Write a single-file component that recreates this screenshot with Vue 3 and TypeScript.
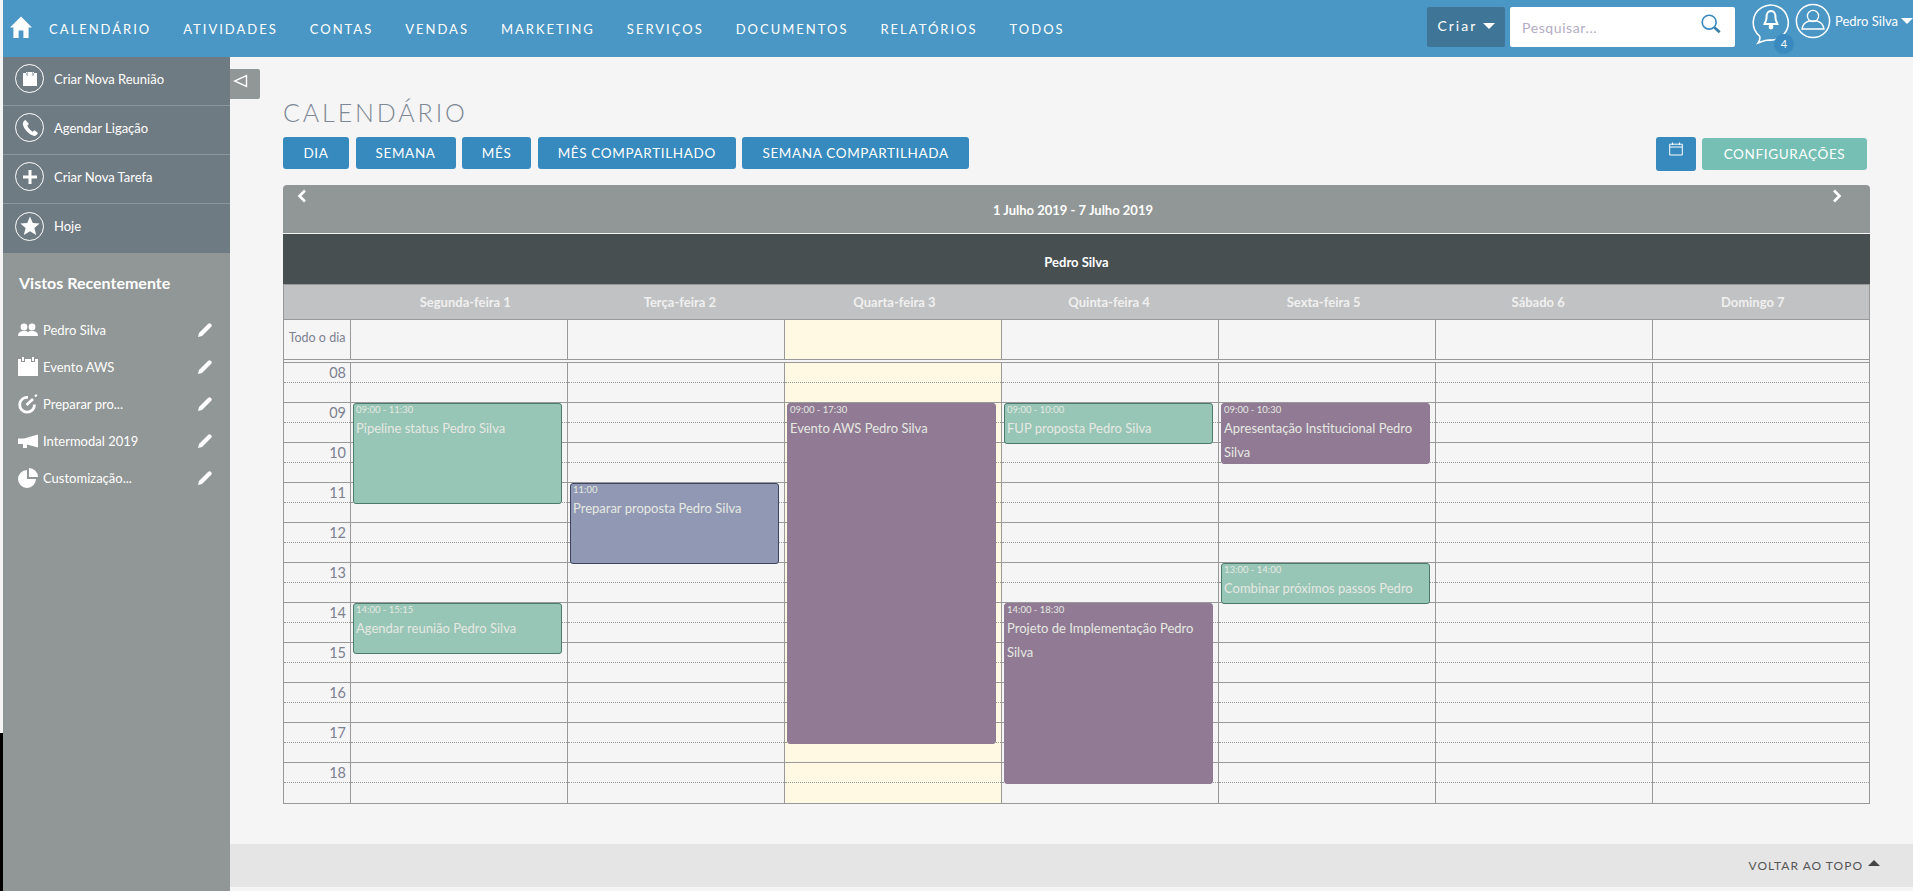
<script setup lang="ts">
interface CalEvent {
  day: number
  start: number
  hours: number
  time: string
  title: string
  kind: 'meeting' | 'call' | 'task'
}

const navItems = ['Calendário', 'Atividades', 'Contas', 'Vendas', 'Marketing', 'Serviços', 'Documentos', 'Relatórios', 'Todos']
const days = ['Segunda-feira 1', 'Terça-feira 2', 'Quarta-feira 3', 'Quinta-feira 4', 'Sexta-feira 5', 'Sábado 6', 'Domingo 7']
const hours = ['08', '09', '10', '11', '12', '13', '14', '15', '16', '17', '18']
const viewButtons = ['Dia', 'Semana', 'Mês', 'Mês Compartilhado', 'Semana Compartilhada']

const recents = [
  { label: 'Pedro Silva', icon: 'people' },
  { label: 'Evento AWS', icon: 'calendar' },
  { label: 'Preparar pro...', icon: 'task' },
  { label: 'Intermodal 2019', icon: 'horn' },
  { label: 'Customização...', icon: 'pie' },
]

const events: CalEvent[] = [
  { day: 0, start: 9, hours: 2.5, time: '09:00 - 11:30', title: 'Pipeline status Pedro Silva', kind: 'call' },
  { day: 0, start: 14, hours: 1.25, time: '14:00 - 15:15', title: 'Agendar reunião Pedro Silva', kind: 'call' },
  { day: 1, start: 11, hours: 2, time: '11:00', title: 'Preparar proposta Pedro Silva', kind: 'task' },
  { day: 2, start: 9, hours: 8.5, time: '09:00 - 17:30', title: 'Evento AWS Pedro Silva', kind: 'meeting' },
  { day: 3, start: 9, hours: 1, time: '09:00 - 10:00', title: 'FUP proposta Pedro Silva', kind: 'call' },
  { day: 3, start: 14, hours: 4.5, time: '14:00 - 18:30', title: 'Projeto de Implementação Pedro Silva', kind: 'meeting' },
  { day: 4, start: 9, hours: 1.5, time: '09:00 - 10:30', title: 'Apresentação Institucional Pedro Silva', kind: 'meeting' },
  { day: 4, start: 13, hours: 1, time: '13:00 - 14:00', title: 'Combinar próximos passos Pedro', kind: 'call' },
]

const HOUR_PX = 40
const eventsFor = (day: number) => events.filter((e) => e.day === day)
const eventStyle = (e: CalEvent) => ({
  top: `${(e.start - 8) * HOUR_PX}px`,
  height: `${e.hours * HOUR_PX + 1}px`,
})
</script>

<template>
  <div class="page">
    <header class="topbar">
      <svg class="home" viewBox="0 0 24 24" width="24" height="24"><path d="M12 1.5 L23 12.5 H19.6 V23 H14.4 V15.5 H9.6 V23 H4.4 V12.5 H1 Z" fill="#fff" /></svg>
      <nav class="nav">
        <a v-for="n in navItems" :key="n">{{ n }}</a>
      </nav>
      <div class="top-right">
        <button class="create">Criar <span class="caret"></span></button>
        <div class="search">
          <span>Pesquisar...</span>
          <svg viewBox="0 0 24 24" width="22" height="22"><circle cx="10" cy="10" r="7.6" fill="none" stroke="#3a8abf" stroke-width="1.8" /><path d="M15.8 15.8 L21.5 21" stroke="#3a7fa8" stroke-width="3" /></svg>
        </div>
        <div class="bell">
          <svg viewBox="0 0 38 42" width="38" height="42">
            <path d="M6 40 C8 37 8.5 35 7.5 33 A17.5 17.5 0 1 1 17 37 C13 37 10 38.5 6 40 Z" fill="none" stroke="#fff" stroke-width="1.6" />
            <path d="M19 8 C14.5 8 14.5 12 14.5 15 C14.5 18 13 19 12.5 21 H25.5 C25 19 23.5 18 23.5 15 C23.5 12 23.5 8 19 8 Z" fill="none" stroke="#fff" stroke-width="2" />
            <circle cx="19" cy="24" r="2.4" fill="#fff" />
          </svg>
          <span class="badge">4</span>
        </div>
        <div class="user">
          <svg viewBox="0 0 36 36" width="36" height="36">
            <circle cx="18" cy="18" r="16.6" fill="none" stroke="#fff" stroke-width="1.5" />
            <circle cx="18" cy="13" r="5.6" fill="none" stroke="#fff" stroke-width="1.3" />
            <path d="M7 26 C8 20 12 18.5 14 18 H22 C24 18.5 28 20 29 26 Z" fill="none" stroke="#fff" stroke-width="1.3" />
          </svg>
          <span>Pedro Silva</span>
          <span class="caret"></span>
        </div>
      </div>
    </header>

    <div class="body">
      <aside class="sidebar">
        <ul class="actions">
          <li>
            <span class="round"><svg viewBox="0 0 14 14" width="14" height="14"><path fill-rule="evenodd" d="M0 1 H3 V0 H4.5 V3 H5 V0 H9 V3 H9.5 V0 H11 V1 H14 V14 H0 Z M3.5 1 V3.5 H5 V1 Z M9 1 V3.5 H10.5 V1 Z" fill="#fff" /></svg></span>
            Criar Nova Reunião
          </li>
          <li>
            <span class="round"><svg viewBox="0 0 18 18" width="18" height="18"><path d="M4.5 1 C2.5 2 1.5 3.5 2 6 C3 10 8 15.5 12.5 16.8 C14.5 17.2 16 16 17 14 L13.6 11.2 L11.5 12.8 C9.5 11.8 7 8.8 6.3 6.6 L8 5 Z" fill="#fff" /></svg></span>
            Agendar Ligação
          </li>
          <li>
            <span class="round"><svg viewBox="0 0 16 16" width="16" height="16"><path d="M6.5 1 H9.5 V6.5 H15 V9.5 H9.5 V15 H6.5 V9.5 H1 V6.5 H6.5 Z" fill="#fff" /></svg></span>
            Criar Nova Tarefa
          </li>
          <li>
            <span class="round"><svg viewBox="0 0 20 20" width="20" height="20"><path d="M10 .5 L12.8 7 L19.6 7.4 L14.4 12 L16.2 19 L10 15.2 L3.8 19 L5.6 12 L.4 7.4 L7.2 7 Z" fill="#fff" /></svg></span>
            Hoje
          </li>
        </ul>
        <h3>Vistos Recentemente</h3>
        <ul class="recents">
          <li v-for="r in recents" :key="r.label">
            <svg class="r-icon" viewBox="0 0 20 20" width="20" height="20">
              <template v-if="r.icon === 'people'">
                <circle cx="6" cy="7" r="3.4" fill="#fff" /><circle cx="14" cy="7" r="3.4" fill="#fff" />
                <path d="M0 16 C0 12 3 11 6 11 C8 11 9.5 11.5 10 12.2 C10.5 11.5 12 11 14 11 C17 11 20 12 20 16 Z" fill="#fff" />
              </template>
              <path v-else-if="r.icon === 'calendar'" d="M0 2 H3 V5 H7 V2 H13 V5 H17 V2 H20 V19 H0 Z M4 0 H6 V4 H4 Z M14 0 H16 V4 H14 Z" fill="#fff" />
              <template v-else-if="r.icon === 'task'">
                <path d="M16.5 10.5 A7.4 7.4 0 1 1 10 3.4" fill="none" stroke="#fff" stroke-width="2.8" />
                <path d="M8.5 11 L15 5" fill="none" stroke="#fff" stroke-width="2.8" />
                <path d="M17 2.5 L18.8 .8" fill="none" stroke="#fff" stroke-width="2" />
              </template>
              <path v-else-if="r.icon === 'horn'" d="M0 7.5 H6 L20 3.5 V16.5 L9 13.5 V17 H5 V13 H0 Z" fill="#fff" />
              <path v-else d="M9 2 V11 H18 A9 9 0 1 1 9 2 Z M11 0 A9 9 0 0 1 20 9 H11 Z" fill="#fff" />
            </svg>
            <span class="r-label">{{ r.label }}</span>
            <svg class="pencil" viewBox="0 0 14 14" width="14" height="14"><path d="M0 14 L1 10 L10 1 C11 0 12 0 13 1 C14 2 14 3 13 4 L4 13 Z" fill="#fff" /></svg>
          </li>
        </ul>
      </aside>

      <main class="main">
        <span class="toggle">
          <svg viewBox="0 0 15 14" width="15" height="14"><path d="M13.5 1.5 V12.5 L1.5 7 Z" fill="none" stroke="#fff" stroke-width="1.4" /></svg>
        </span>
        <div class="content">
          <h1>Calendário</h1>
          <div class="toolbar">
            <button v-for="b in viewButtons" :key="b" class="btn">{{ b }}</button>
            <span class="spacer"></span>
            <button class="btn cal-btn">
              <svg viewBox="0 0 14 14" width="14" height="14"><path d="M.7 2.2 H13.3 V13 H.7 Z M.7 5 H13.3 M3.5 .5 V3 M10.5 .5 V3" fill="none" stroke="#fff" stroke-width="1" /></svg>
            </button>
            <button class="btn config">Configurações</button>
          </div>

          <section class="calendar">
            <div class="cal-nav">
              <svg class="arrow" viewBox="0 0 10 14" width="10" height="14"><path d="M8 1.5 L2.5 7 L8 12.5" fill="none" stroke="#fff" stroke-width="2.6" /></svg>
              <strong>1 Julho 2019 - 7 Julho 2019</strong>
              <svg class="arrow next" viewBox="0 0 10 14" width="10" height="14"><path d="M2 1.5 L7.5 7 L2 12.5" fill="none" stroke="#fff" stroke-width="2.6" /></svg>
            </div>
            <div class="cal-owner">Pedro Silva</div>
            <div class="cal-table">
              <div class="row head">
                <div class="time-cell"></div>
                <div v-for="d in days" :key="d" class="day-head">{{ d }}</div>
              </div>
              <div class="row allday">
                <div class="time-cell">Todo o dia</div>
                <div v-for="(d, i) in days" :key="d" class="day-cell" :class="{ today: i === 2 }"></div>
              </div>
              <div class="row grid">
                <div class="hours">
                  <div v-for="h in hours" :key="h" class="hour-label">{{ h }}</div>
                </div>
                <div v-for="(d, i) in days" :key="d" class="day-col" :class="{ today: i === 2 }">
                  <div class="slots">
                    <div v-for="h in hours" :key="h" class="slot"></div>
                  </div>
                  <div
                    v-for="e in eventsFor(i)"
                    :key="e.title"
                    class="event"
                    :class="e.kind"
                    :style="eventStyle(e)"
                  >
                    <div class="e-time">{{ e.time }}</div>
                    <div class="e-title">{{ e.title }}</div>
                  </div>
                </div>
              </div>
            </div>
          </section>
        </div>
        <footer class="footer">
          <span>Voltar ao topo</span>
          <span class="up"></span>
        </footer>
      </main>
    </div>
  </div>
</template>

<style>
html,
body {
  margin: 0;
  background: #f5f5f5;
  overflow: hidden;
}
</style>

<style scoped>
.page {
  width: 1913px;
  height: 891px;
  padding-left: 3px;
  box-sizing: border-box;
  font-family: Lato, "Liberation Sans", sans-serif;
  background: linear-gradient(to bottom, #f5f5f5 733px, #000 733px);
  overflow: hidden;
}

.topbar {
  height: 57px;
  background: #4a96c4;
  display: flex;
  align-items: center;
  color: #fff;
}

.home {
  margin-left: 6px;
  margin-top: -4px;
}

.nav {
  display: flex;
  gap: 32px;
  margin-left: 16px;
}

.nav a {
  font-size: 13px;
  letter-spacing: 2px;
  text-transform: uppercase;
}

.top-right {
  margin-left: auto;
  display: flex;
  align-items: flex-start;
  height: 57px;
}

.create {
  margin-top: 7px;
  width: 78px;
  height: 40px;
  border: 0;
  border-radius: 2px;
  background: #3f7596;
  color: #fff;
  font: 14px Lato, sans-serif;
  letter-spacing: 2px;
  padding: 0 0 4px;
}

.caret {
  display: inline-block;
  border-left: 6px solid transparent;
  border-right: 6px solid transparent;
  border-top: 6px solid #fff;
  vertical-align: 2px;
}

.search {
  margin: 7px 0 0 5px;
  width: 225px;
  height: 40px;
  box-sizing: border-box;
  padding: 0 13px 0 12px;
  border-radius: 2px;
  background: #fff;
  color: #b3adc4;
  font-size: 14px;
  letter-spacing: 0.6px;
  display: flex;
  align-items: center;
  justify-content: space-between;
}

.search svg {
  margin-top: -6px;
}

.bell {
  position: relative;
  margin: 3px 0 0 17px;
  width: 38px;
  height: 42px;
}

.badge {
  position: absolute;
  left: 22px;
  top: 31px;
  width: 20px;
  height: 20px;
  line-height: 20px;
  border-radius: 50%;
  background: #3a8abf;
  font-size: 11px;
  text-align: center;
}

.user {
  margin: 3px 0 0 5px;
  display: flex;
  align-items: center;
  gap: 4px;
  height: 36px;
  font-size: 13px;
  white-space: nowrap;
}

.user .caret {
  margin-left: -1px;
  vertical-align: 0;
}

.body {
  display: flex;
  height: 834px;
}

.sidebar {
  width: 227px;
  flex: none;
  background: #919796;
  color: #fff;
}

.actions {
  list-style: none;
  margin: 0;
  padding: 0;
  background: #6f7b82;
}

.actions li {
  height: 49px;
  box-sizing: border-box;
  border-bottom: 1px solid #8d969b;
  padding: 0 0 5px 12px;
  display: flex;
  align-items: center;
  gap: 10px;
  font-size: 13px;
}

.actions li:last-child {
  border-bottom: 0;
}

.round {
  width: 27px;
  height: 27px;
  border: 1.5px solid #fff;
  border-radius: 50%;
  display: flex;
  align-items: center;
  justify-content: center;
  flex: none;
}

.sidebar h3 {
  margin: 0;
  padding: 20px 0 0 16px;
  font-size: 16px;
  line-height: 20px;
  font-weight: 700;
}

.recents {
  list-style: none;
  margin: 18px 0 0;
  padding: 0 16px 0 15px;
}

.recents li {
  height: 37px;
  display: flex;
  align-items: center;
  font-size: 13px;
}

.r-icon {
  flex: none;
}

.r-label {
  margin-left: 5px;
  flex: 1;
}

.pencil {
  margin-right: 2px;
}

.main {
  position: relative;
  flex: 1;
  min-width: 0;
  display: flex;
  flex-direction: column;
  background: #f5f5f5;
}

.toggle {
  position: absolute;
  left: 0;
  top: 12px;
  width: 30px;
  height: 30px;
  background: #919796;
  border-radius: 0 2px 2px 0;
  display: flex;
  align-items: center;
  padding-left: 3px;
  box-sizing: border-box;
}

.toggle svg {
  margin-top: -6px;
}

.content {
  padding: 40px 42px 0 53px;
  height: 787px;
  box-sizing: border-box;
}

.content h1 {
  margin: 0;
  height: 40px;
  font-size: 25px;
  line-height: 30px;
  font-weight: 300;
  letter-spacing: 2.9px;
  text-transform: uppercase;
  color: #7d8894;
}

.toolbar {
  display: flex;
  align-items: flex-start;
  gap: 6.5px;
  height: 48px;
}

.spacer {
  flex: 1;
}

.btn {
  height: 32px;
  padding: 0 20px;
  border: 0;
  border-radius: 3px;
  background: #378abd;
  color: #fff;
  font: 13.5px Lato, sans-serif;
  letter-spacing: 0.65px;
  text-transform: uppercase;
  white-space: nowrap;
}

.btn:nth-child(1) {
  min-width: 66px;
  padding: 0;
}

.btn:nth-child(3) {
  min-width: 69px;
  padding: 0;
}

.cal-btn {
  width: 40px;
  height: 34px;
  padding: 0 0 8px;
}

.config {
  width: 165px;
  margin: 1px 4px 0 0;
  background: #75bfb5;
  padding: 0;
}

.calendar {
  width: 1587px;
}

.cal-nav {
  height: 48px;
  background: #919796;
  border-radius: 4px 4px 0 0;
  display: grid;
  grid-template-columns: 1fr auto 1fr;
  align-items: center;
  padding: 0 28px 0 14px;
  color: #fff;
  font-size: 13px;
}

.cal-nav strong {
  margin: 2px 0 0 7px;
}

.cal-nav .arrow {
  margin-top: -27px;
}

.cal-nav .next {
  justify-self: end;
}

.cal-owner {
  height: 50px;
  margin-top: 1px;
  background: #474f51;
  color: #fff;
  font-size: 13px;
  font-weight: 700;
  line-height: 57px;
  text-align: center;
}

.cal-table {
  border: solid #999;
  border-width: 0 1px 1px;
  box-sizing: border-box;
}

.row {
  display: flex;
}

.head {
  height: 36px;
  box-sizing: border-box;
  background: #c1c2c3;
  border-top: 1px solid #999;
  border-bottom: 1px solid #999;
  padding-right: 9px;
  color: #f0f0f0;
  font-size: 13px;
  font-weight: 700;
  line-height: 34px;
}

.time-cell,
.hours {
  width: 66px;
  flex: none;
}

.head .time-cell {
  width: 74px;
}

.day-head {
  flex: 1;
  text-align: center;
}

.allday {
  height: 40px;
  box-sizing: border-box;
  border-bottom: 1px solid #999;
}

.allday .time-cell {
  font-size: 12.5px;
  line-height: 36px;
  text-align: center;
  color: #7d8190;
}

.day-cell {
  flex: 1;
  border-left: 1px solid #999;
}

.grid {
  border-top: 1px solid #999;
  margin-top: 2px;
}

.today {
  background: #fff9e3;
}

.hour-label,
.slot {
  position: relative;
  height: 40px;
  box-sizing: border-box;
  border-bottom: 1px solid #999;
}

.hour-label {
  padding-right: 4px;
  font-size: 14.5px;
  line-height: 20px;
  text-align: right;
  color: #7d8190;
}

.hour-label::after,
.slot::after {
  content: '';
  position: absolute;
  left: 0;
  right: 0;
  top: 19px;
  border-top: 1px dotted #999;
}

.hour-label:last-child,
.slot:last-child {
  border-bottom: 0;
}

.day-col {
  position: relative;
  flex: 1;
  border-left: 1px solid #999;
}

.event {
  position: absolute;
  left: 2px;
  right: 5px;
  box-sizing: border-box;
  border: 1px solid;
  border-radius: 3px;
  padding: 0 2px;
  overflow: hidden;
  color: #e6e9e2;
}

.call {
  background: #97c5b6;
  border-color: #4c7a6c;
}

.task {
  background: #9098b4;
  border-color: #3d4560;
}

.meeting {
  background: #907a94;
  border-color: #907a94;
}

.e-time {
  font-size: 9.5px;
  line-height: 12px;
}

.e-title {
  font-size: 13px;
  line-height: 24px;
}

.footer {
  height: 43px;
  background: #e5e5e5;
  display: flex;
  align-items: center;
  justify-content: flex-end;
  padding-right: 33px;
  gap: 5px;
  font-size: 12px;
  letter-spacing: 1px;
  text-transform: uppercase;
  color: #555;
}

.up {
  border-left: 6px solid transparent;
  border-right: 6px solid transparent;
  border-bottom: 6px solid #444;
  margin-top: -6px;
}
</style>
